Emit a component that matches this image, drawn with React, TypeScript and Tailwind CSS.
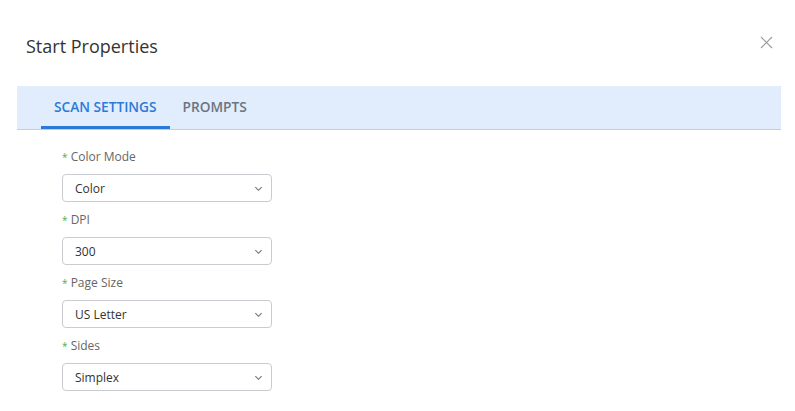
import React from 'react';

const FIELDS = [
    { label: 'Color Mode', value: 'Color' },
    { label: 'DPI', value: '300' },
    { label: 'Page Size', value: 'US Letter' },
    { label: 'Sides', value: 'Simplex' },
];

const Chevron = () => (
    <svg className="w-[9px] h-[9px] text-[#707070]" viewBox="0 0 10 10" fill="none" stroke="currentColor" strokeWidth={1.2}>
        <path d="M1.5 3.5 5 7l3.5-3.5" />
    </svg>
);

export default function App() {
    return (
        <div className="w-[795px] h-[411px] bg-white overflow-hidden" style={{ fontFamily: '"Open Sans", sans-serif' }}>
            <div className="flex items-start justify-between pl-[26px] pr-[22px] pt-[33px] h-[86px]">
                <h1 className="text-[18px] leading-[26px] text-[#333]">Start Properties</h1>
                <svg className="w-[13px] h-[13px] mt-[3px] text-[#9a9a9a]" viewBox="0 0 13 13" stroke="currentColor" strokeWidth={1.1}>
                    <path d="M1 1l11 11M12 1 1 12" />
                </svg>
            </div>

            <div className="mx-[17px] w-[764px] h-[44px] bg-[#e1edfc] border-b border-[#c9cdd2] flex items-stretch pl-[24px]">
                <button className="relative flex items-center px-[13px] text-[13.7px] font-semibold text-[#2b79d8]">
                    SCAN SETTINGS
                    <span className="absolute left-0 right-0 bottom-0 h-[3px] bg-[#2b79d8]" />
                </button>
                <button className="flex items-center px-[13px] text-[13.7px] font-semibold text-[#6b7480]">
                    PROMPTS
                </button>
            </div>

            <div className="pl-[62px] pt-[17px] flex flex-col">
                {FIELDS.map((f, i) => (
                    <div key={f.label} className={i > 0 ? 'mt-[8px]' : ''}>
                        <div className="h-[20px] text-[12px] leading-[20px] text-[#666]">
                            <span className="text-[10px] text-[#4caf50] align-top">*</span> {f.label}
                        </div>
                        <div className="mt-[7px] w-[210px] h-[28px] border border-[#c8ccd0] rounded-[4px] flex items-center justify-between pl-[12px] pr-[8px] text-[12px] text-[#333]">
                            <span className="pt-[1px]">{f.value}</span>
                            <Chevron />
                        </div>
                    </div>
                ))}
            </div>
        </div>
    );
}
